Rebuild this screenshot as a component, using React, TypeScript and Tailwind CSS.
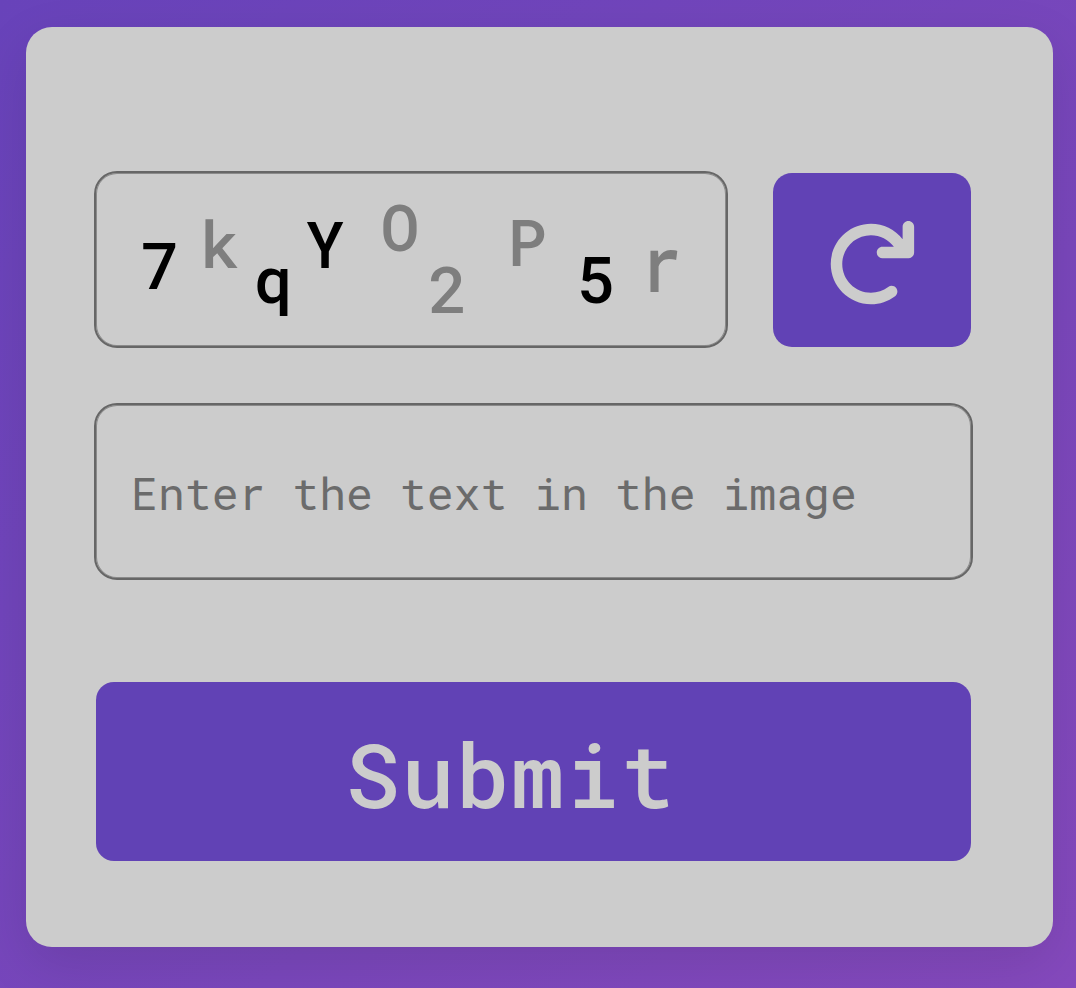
const captcha = [
  { char: "7", style: "text-black translate-y-[15px]" },
  { char: "k", style: "text-[#7e7e7e] ml-[20px] translate-y-[-6px]" },
  { char: "q", style: "text-black ml-[13px] translate-y-[29px]" },
  { char: "Y", style: "text-black ml-[12px] translate-y-[-6px]" },
  { char: "O", style: "text-[#7e7e7e] ml-[35px] translate-y-[-23px]" },
  { char: "2", style: "text-[#7e7e7e] ml-[8px] translate-y-[39px]" },
  { char: "P", style: "text-[#7e7e7e] ml-[39px] translate-y-[-8px]" },
  { char: "5", style: "text-black ml-[29px] translate-y-[29px]" },
  { char: "r", style: "text-[#7e7e7e] ml-[25px] translate-y-[13px] scale-x-[1.06] scale-y-[1.2]" },
];

export default function App() {
  return (
    <main className="h-[988px] w-[1076px] bg-linear-to-br from-[#6843ba] to-[#8549bd] pt-[27px] pl-[26px] font-['Roboto_Mono','Roboto',monospace]">
      <form
        onSubmit={(e) => e.preventDefault()}
        className="flex h-[920px] w-[1027px] flex-col rounded-[26px] bg-[#cccccc] pt-[144px] pl-[68px] shadow-[0_18px_54px_rgba(0,0,0,0.1)]"
      >
        <div className="flex items-start gap-[45px]">
          <div className="flex h-[177px] w-[634px] items-start rounded-[23px] border-2 border-[#666666] pt-[36px] pl-[44px] text-[65px] leading-[80px] font-medium shadow-[inset_0_0_0_1px_#8a8a8a]">
            {captcha.map(({ char, style }) => (
              <span key={char} className={`flex w-[40px] justify-center ${style}`}>
                {char}
              </span>
            ))}
          </div>
          <button
            type="button"
            aria-label="Refresh"
            className="mt-[2px] flex h-[174px] w-[198px] items-center justify-center rounded-[19px] bg-[#6142b5] text-[#cccccc]"
          >
            <svg viewBox="0 0 512 512" className="mt-[7px] mr-[3px] h-[92px] w-[92px]" fill="currentColor">
              <path d="M496 48V192c0 17.69-14.31 32-32 32H320c-17.69 0-32-14.31-32-32s14.31-32 32-32h63.39c-29.97-39.7-77.25-63.78-127.6-63.78C167.7 96.22 96 167.9 96 256s71.69 159.8 159.8 159.8c34.88 0 68.03-11.03 95.88-31.94c14.22-10.53 34.22-7.75 44.81 6.375c10.59 14.16 7.75 34.22-6.375 44.81c-39.03 29.28-85.36 44.86-134.2 44.86C132.5 479.9 32 379.4 32 256s100.5-223.9 223.9-223.9c69.15 0 134 32.47 176.1 86.12V48c0-17.69 14.31-32 32-32S496 30.31 496 48z" />
            </svg>
          </button>
        </div>
        <input
          type="text"
          placeholder="Enter the text in the image"
          className="mt-[55px] h-[177px] w-[879px] rounded-[23px] border-2 border-[#666666] bg-transparent pt-[2px] pl-[35px] text-[44.8px] shadow-[inset_0_0_0_1px_#8a8a8a] outline-none placeholder:text-[#6b6b6b]"
        />
        <button
          type="submit"
          className="mt-[102px] ml-[2px] flex h-[179px] w-[875px] items-center rounded-[18px] bg-[#6142b5] pt-[5px] pl-[250px] text-[89px] font-medium tracking-[1.6px] text-[#cccccc]"
        >
          Submit
        </button>
      </form>
    </main>
  );
}
